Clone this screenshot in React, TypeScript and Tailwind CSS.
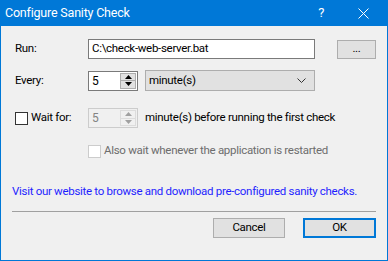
import React from "react";

const font = { fontFamily: 'Roboto, "Liberation Sans", Arial, sans-serif' };

const Spinner = ({ value, disabled }: { value: string; disabled?: boolean }) => {
  const border = disabled ? "border-[#cccccc]" : "border-[#7a7a7a]";
  const arrow = disabled ? "#a0a0a0" : "#000000";
  return (
    <div className={`flex w-[50px] h-[20px] border ${border} ${disabled ? "bg-[#f0f0f0]" : "bg-white"}`}>
      <div className={`flex-1 pl-[3px] flex items-center text-[12px] ${disabled ? "text-[#838383]" : "text-black"}`}>{value}</div>
      <div className="w-[17px] flex flex-col py-[1px] pr-[1px]">
        <div className={`flex-1 flex items-center justify-center border ${disabled ? "border-[#dcdcdc] bg-[#f0f0f0]" : "border-[#adadad] bg-[#e1e1e1]"}`}>
          <svg width="7" height="4" viewBox="0 0 7 4">
            <path d="M3.5 0L7 4H0Z" fill={arrow} />
          </svg>
        </div>
        <div className={`flex-1 flex items-center justify-center border border-t-0 ${disabled ? "border-[#dcdcdc] bg-[#f0f0f0]" : "border-[#adadad] bg-[#e1e1e1]"}`}>
          <svg width="7" height="4" viewBox="0 0 7 4">
            <path d="M0 0H7L3.5 4Z" fill={arrow} />
          </svg>
        </div>
      </div>
    </div>
  );
};

const App = () => {
  return (
    <div className="w-[388px] h-[261px] bg-[#0078d7] px-[1px] pb-[1px] flex flex-col text-[11.5px] text-black tracking-[-0.3px] whitespace-nowrap" style={font}>
      <div className="h-[26px] shrink-0 flex items-center text-white -mx-[1px]">
        <span className="pl-[5px] text-[12.5px] tracking-[-0.2px]">Configure Sanity Check</span>
        <span className="ml-auto mr-[34px] text-[13px]">?</span>
        <svg className="mr-[19px]" width="11" height="11" viewBox="0 0 11 11">
          <path d="M0.5 0.5L10.5 10.5M10.5 0.5L0.5 10.5" stroke="#ffffff" strokeWidth="1" />
        </svg>
      </div>
      <div className="flex-1 bg-[#f0f0f0] flex flex-col pl-[11px] pr-[11px]">
        <div className="flex items-center mt-[13px] h-[20px]">
          <span className="w-[76px] pl-[3px]">Run:</span>
          <div className="w-[227px] h-[20px] bg-white border border-[#7a7a7a] flex items-center pl-[3px]">C:\check-web-server.bat</div>
          <button className="ml-[22px] w-[39px] h-[19px] bg-[#e1e1e1] border border-[#adadad] flex items-center justify-center">...</button>
        </div>

        <div className="flex items-center mt-[11px] h-[21px]">
          <span className="w-[76px] pl-[3px]">Every:</span>
          <Spinner value="5" />
          <div className="ml-[7px] w-[170px] h-[21px] bg-[#e1e1e1] border border-[#adadad] flex items-center pl-[3px] pr-[8px]">
            <span>minute(s)</span>
            <svg className="ml-auto" width="9" height="5" viewBox="0 0 9 5">
              <path d="M0.5 0.5L4.5 4.5L8.5 0.5" stroke="#333333" fill="none" strokeWidth="1" />
            </svg>
          </div>
        </div>

        <div className="flex items-center mt-[17px] h-[20px]">
          <div className="w-[76px] flex items-center pl-[3px]">
            <div className="w-[13px] h-[13px] border border-[#333333] bg-white" />
            <span className="ml-[3px]">Wait for:</span>
          </div>
          <Spinner value="5" disabled />
          <span className="ml-[7px]">minute(s) before running the first check</span>
        </div>

        <div className="flex items-center mt-[16px] h-[14px] pl-[76px]">
          <div className="w-[13px] h-[13px] border border-[#cccccc] bg-white" />
          <span className="ml-[3px] text-[#6d6d6d]">Also wait whenever the application is restarted</span>
        </div>

        <div className="mt-[26px] h-[14px] leading-[14px] text-[#1f1fff]">Visit our website to browse and download pre-configured sanity checks.</div>

        <div className="mt-[13px] h-[1px] bg-[#a0a0a0]" />

        <div className="flex justify-end mt-[6px]">
          <button className="w-[72px] h-[20px] bg-[#e1e1e1] border border-[#adadad] flex items-center justify-center">Cancel</button>
          <button className="ml-[18px] w-[73px] h-[20px] bg-[#e1e1e1] border-2 border-[#0078d7] flex items-center justify-center">OK</button>
        </div>
      </div>
    </div>
  );
};

export default App;
